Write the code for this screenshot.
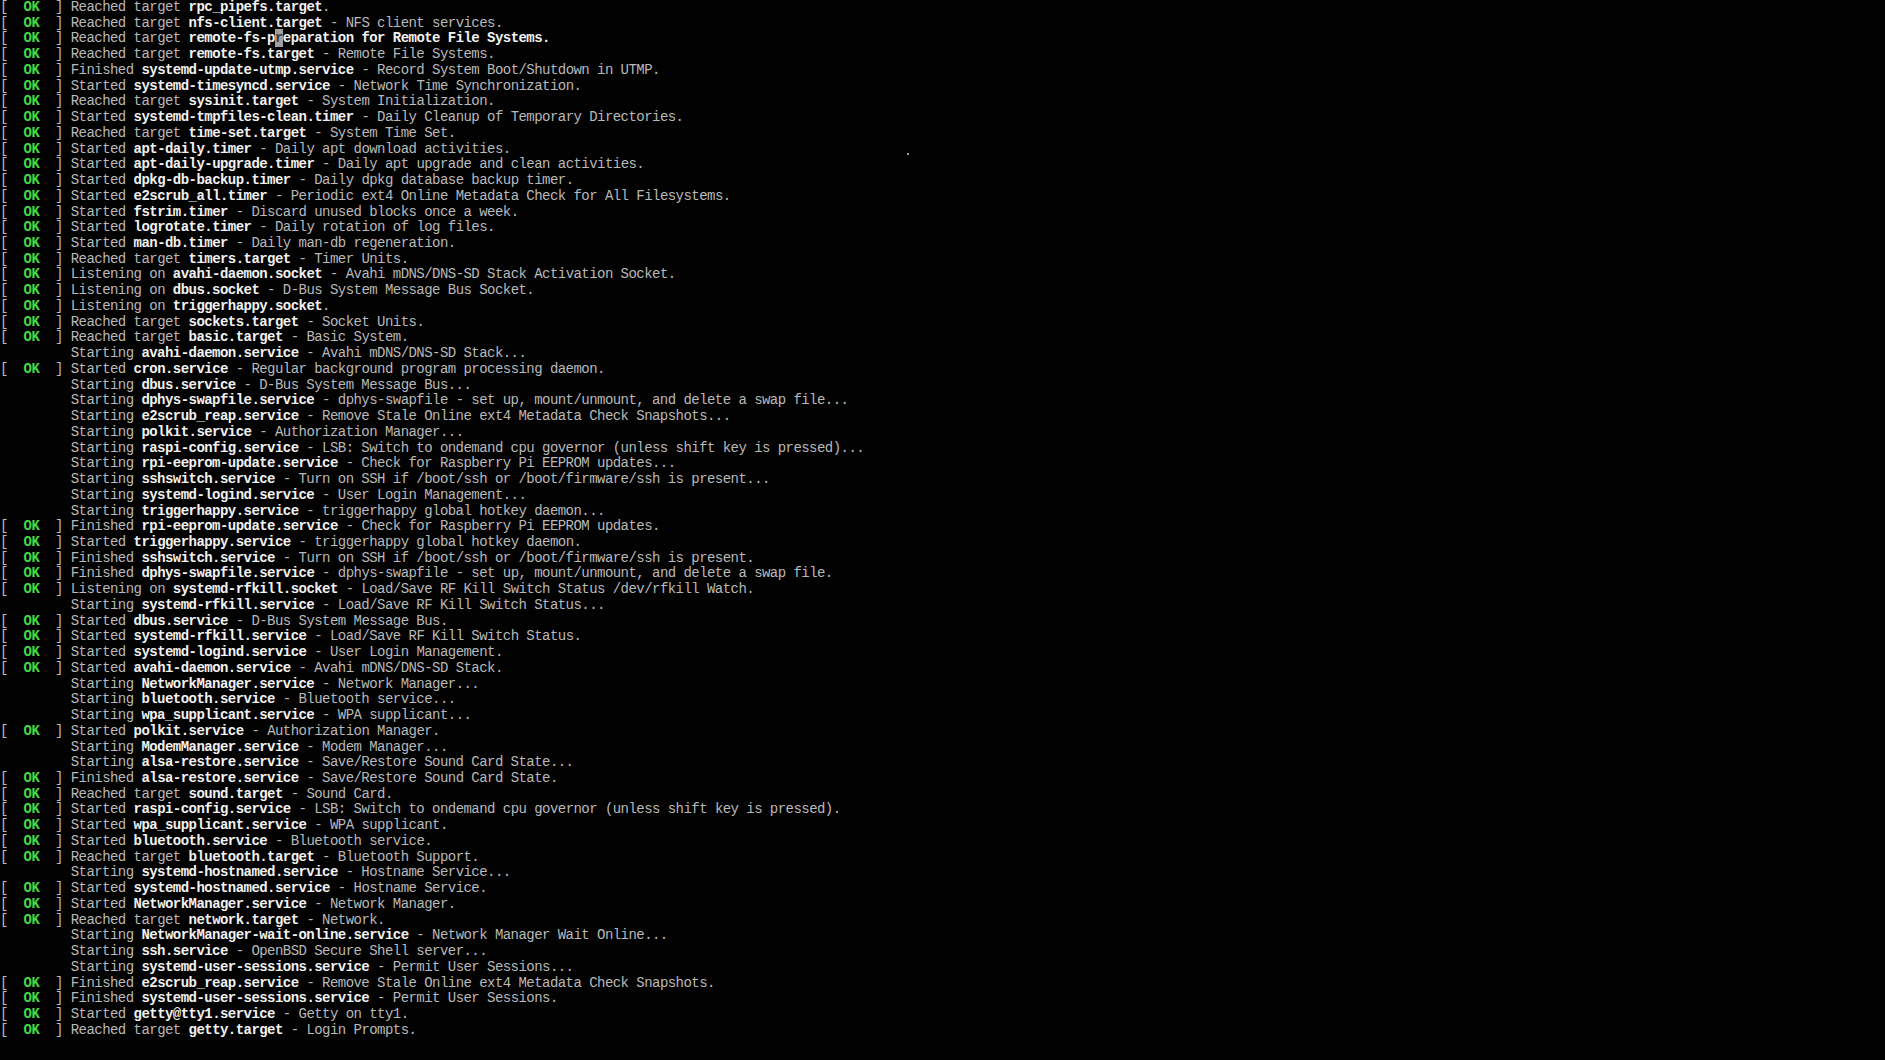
import React from 'react';

// Boot log as shown on the console: [status, verb, unit, description]
// status: 'ok' prints "[  OK  ]", 's' is an indented "Starting" line
type Line = [string, string, string, string];

const LINES: Line[] = [
  ['ok', 'Reached target', 'rpc_pipefs.target', '.'],
  ['ok', 'Reached target', 'nfs-client.target', ' - NFS client services.'],
  ['cur', 'Reached target', 'remote-fs-p', ''],
  ['ok', 'Reached target', 'remote-fs.target', ' - Remote File Systems.'],
  ['ok', 'Finished', 'systemd-update-utmp.service', ' - Record System Boot/Shutdown in UTMP.'],
  ['ok', 'Started', 'systemd-timesyncd.service', ' - Network Time Synchronization.'],
  ['ok', 'Reached target', 'sysinit.target', ' - System Initialization.'],
  ['ok', 'Started', 'systemd-tmpfiles-clean.timer', ' - Daily Cleanup of Temporary Directories.'],
  ['ok', 'Reached target', 'time-set.target', ' - System Time Set.'],
  ['ok', 'Started', 'apt-daily.timer', ' - Daily apt download activities.'],
  ['ok', 'Started', 'apt-daily-upgrade.timer', ' - Daily apt upgrade and clean activities.'],
  ['ok', 'Started', 'dpkg-db-backup.timer', ' - Daily dpkg database backup timer.'],
  ['ok', 'Started', 'e2scrub_all.timer', ' - Periodic ext4 Online Metadata Check for All Filesystems.'],
  ['ok', 'Started', 'fstrim.timer', ' - Discard unused blocks once a week.'],
  ['ok', 'Started', 'logrotate.timer', ' - Daily rotation of log files.'],
  ['ok', 'Started', 'man-db.timer', ' - Daily man-db regeneration.'],
  ['ok', 'Reached target', 'timers.target', ' - Timer Units.'],
  ['ok', 'Listening on', 'avahi-daemon.socket', ' - Avahi mDNS/DNS-SD Stack Activation Socket.'],
  ['ok', 'Listening on', 'dbus.socket', ' - D-Bus System Message Bus Socket.'],
  ['ok', 'Listening on', 'triggerhappy.socket', '.'],
  ['ok', 'Reached target', 'sockets.target', ' - Socket Units.'],
  ['ok', 'Reached target', 'basic.target', ' - Basic System.'],
  ['s', 'Starting', 'avahi-daemon.service', ' - Avahi mDNS/DNS-SD Stack...'],
  ['ok', 'Started', 'cron.service', ' - Regular background program processing daemon.'],
  ['s', 'Starting', 'dbus.service', ' - D-Bus System Message Bus...'],
  ['s', 'Starting', 'dphys-swapfile.service', ' - dphys-swapfile - set up, mount/unmount, and delete a swap file...'],
  ['s', 'Starting', 'e2scrub_reap.service', ' - Remove Stale Online ext4 Metadata Check Snapshots...'],
  ['s', 'Starting', 'polkit.service', ' - Authorization Manager...'],
  ['s', 'Starting', 'raspi-config.service', ' - LSB: Switch to ondemand cpu governor (unless shift key is pressed)...'],
  ['s', 'Starting', 'rpi-eeprom-update.service', ' - Check for Raspberry Pi EEPROM updates...'],
  ['s', 'Starting', 'sshswitch.service', ' - Turn on SSH if /boot/ssh or /boot/firmware/ssh is present...'],
  ['s', 'Starting', 'systemd-logind.service', ' - User Login Management...'],
  ['s', 'Starting', 'triggerhappy.service', ' - triggerhappy global hotkey daemon...'],
  ['ok', 'Finished', 'rpi-eeprom-update.service', ' - Check for Raspberry Pi EEPROM updates.'],
  ['ok', 'Started', 'triggerhappy.service', ' - triggerhappy global hotkey daemon.'],
  ['ok', 'Finished', 'sshswitch.service', ' - Turn on SSH if /boot/ssh or /boot/firmware/ssh is present.'],
  ['ok', 'Finished', 'dphys-swapfile.service', ' - dphys-swapfile - set up, mount/unmount, and delete a swap file.'],
  ['ok', 'Listening on', 'systemd-rfkill.socket', ' - Load/Save RF Kill Switch Status /dev/rfkill Watch.'],
  ['s', 'Starting', 'systemd-rfkill.service', ' - Load/Save RF Kill Switch Status...'],
  ['ok', 'Started', 'dbus.service', ' - D-Bus System Message Bus.'],
  ['ok', 'Started', 'systemd-rfkill.service', ' - Load/Save RF Kill Switch Status.'],
  ['ok', 'Started', 'systemd-logind.service', ' - User Login Management.'],
  ['ok', 'Started', 'avahi-daemon.service', ' - Avahi mDNS/DNS-SD Stack.'],
  ['s', 'Starting', 'NetworkManager.service', ' - Network Manager...'],
  ['s', 'Starting', 'bluetooth.service', ' - Bluetooth service...'],
  ['s', 'Starting', 'wpa_supplicant.service', ' - WPA supplicant...'],
  ['ok', 'Started', 'polkit.service', ' - Authorization Manager.'],
  ['s', 'Starting', 'ModemManager.service', ' - Modem Manager...'],
  ['s', 'Starting', 'alsa-restore.service', ' - Save/Restore Sound Card State...'],
  ['ok', 'Finished', 'alsa-restore.service', ' - Save/Restore Sound Card State.'],
  ['ok', 'Reached target', 'sound.target', ' - Sound Card.'],
  ['ok', 'Started', 'raspi-config.service', ' - LSB: Switch to ondemand cpu governor (unless shift key is pressed).'],
  ['ok', 'Started', 'wpa_supplicant.service', ' - WPA supplicant.'],
  ['ok', 'Started', 'bluetooth.service', ' - Bluetooth service.'],
  ['ok', 'Reached target', 'bluetooth.target', ' - Bluetooth Support.'],
  ['s', 'Starting', 'systemd-hostnamed.service', ' - Hostname Service...'],
  ['ok', 'Started', 'systemd-hostnamed.service', ' - Hostname Service.'],
  ['ok', 'Started', 'NetworkManager.service', ' - Network Manager.'],
  ['ok', 'Reached target', 'network.target', ' - Network.'],
  ['s', 'Starting', 'NetworkManager-wait-online.service', ' - Network Manager Wait Online...'],
  ['s', 'Starting', 'ssh.service', ' - OpenBSD Secure Shell server...'],
  ['s', 'Starting', 'systemd-user-sessions.service', ' - Permit User Sessions...'],
  ['ok', 'Finished', 'e2scrub_reap.service', ' - Remove Stale Online ext4 Metadata Check Snapshots.'],
  ['ok', 'Finished', 'systemd-user-sessions.service', ' - Permit User Sessions.'],
  ['ok', 'Started', 'getty@tty1.service', ' - Getty on tty1.'],
  ['ok', 'Reached target', 'getty.target', ' - Login Prompts.'],
];

function Status({ kind }: { kind: string }) {
  if (kind === 's') return <span>{'         '}</span>;
  return (
    <span>
      {'[  '}
      <span className="font-bold text-[#45d845]">OK</span>
      {'  ] '}
    </span>
  );
}

function LogLine({ line }: { line: Line }) {
  const [kind, verb, unit, rest] = line;
  return (
    <div className="h-[15.735px] whitespace-pre">
      <Status kind={kind} />
      {verb}{' '}
      <span className="font-bold text-[#f2f2f2]">{unit}</span>
      {kind === 'cur' && (
        <span className="font-bold text-[#f2f2f2]">
          <span className="bg-[#a0a0a0] py-[1px] text-[#3a3a3a]">r</span>
          eparation for Remote File Systems.
        </span>
      )}
      {rest}
    </div>
  );
}

export default function App() {
  return (
    <div className="relative min-h-[1060px] w-full overflow-hidden bg-[#020202] text-[#b9b9b9] font-['Liberation_Mono',monospace] text-[14px] leading-[15.735px] tracking-[-0.546px]">
      {LINES.map((line, i) => (
        <LogLine key={i} line={line} />
      ))}
      {/* stray pixel on the display */}
      <div className="absolute left-[907px] top-[153px] h-[2px] w-[2px] bg-[#9a9a9a]" />
    </div>
  );
}
